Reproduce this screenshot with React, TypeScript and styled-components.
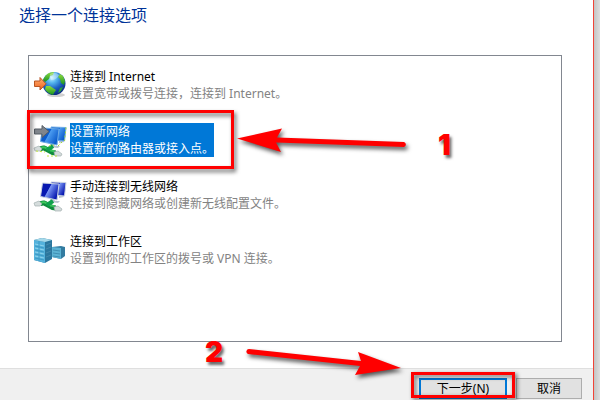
import React from "react";
import styled, { createGlobalStyle } from "styled-components";

const GlobalStyle = createGlobalStyle`
  * { box-sizing: border-box; }
  body {
    margin: 0;
    font: 12px/17px "Noto Sans", "Noto Sans CJK SC", sans-serif;
    color: #000;
    background: #fff;
  }
  button { font: inherit; color: inherit; margin: 0; }
`;

const Screen = styled.div`
  display: flex;
  min-height: 100vh;
  overflow: hidden;
  background: linear-gradient(to left, #dedede, #c4c4c4 6px);
`;

const Dialog = styled.main`
  flex: 1;
  display: flex;
  flex-direction: column;
  margin-right: 6px;
  border-right: 1px solid #f04438;
  background: #fff;
`;

const Title = styled.h1`
  margin: 3px 19px 28px;
  font-size: 16px;
  line-height: 24px;
  font-weight: 400;
  color: #003399;
`;

const OptionList = styled.ul`
  flex: 1;
  display: flex;
  flex-direction: column;
  gap: 21px;
  margin: 0 31px 26px 28px;
  padding: 12px 4px;
  list-style: none;
  border: 1px solid #828790;
`;

const OptionItem = styled.li`
  position: relative;
  display: flex;
`;

const OptionButton = styled.button`
  display: flex;
  gap: 3px;
  padding: 0;
  border: 0;
  background: none;
  text-align: left;
  white-space: nowrap;
`;

const Icon = styled.svg`
  flex: none;
  width: 34px;
  height: 34px;
  overflow: visible;
`;

const OptionText = styled.span<{ $selected: boolean }>`
  display: flex;
  flex-direction: column;
  background: ${(p) => (p.$selected ? "#0078d7" : "transparent")};
  color: ${(p) => (p.$selected ? "#fff" : "#000")};
`;

const Description = styled.span<{ $selected: boolean }>`
  color: ${(p) => (p.$selected ? "#fff" : "#838383")};
`;

const Footer = styled.footer`
  position: relative;
  display: flex;
  justify-content: flex-end;
  gap: 9px;
  height: 32px;
  padding: 9px 11px 1px;
  border-top: 1px solid #dfdfdf;
  background: #f0f0f0;
`;

const PushButton = styled.button<{ $primary?: boolean }>`
  width: ${(p) => (p.$primary ? "88px" : "66px")};
  padding: 0;
  border: ${(p) => (p.$primary ? "2px solid #0078d7" : "1px solid #adadad")};
  background: #e1e1e1;
`;

const ButtonSlot = styled.div`
  position: relative;
  display: flex;
`;

const OptionFrame = styled.span`
  position: absolute;
  left: -6px;
  top: -13px;
  width: 207px;
  height: 59px;
  border: 3px solid #f00;
  filter: drop-shadow(2px 3px 2px rgba(0, 0, 0, 0.6));
  pointer-events: none;
`;

const ButtonFrame = styled.span`
  position: absolute;
  left: -8px;
  top: -6px;
  width: 104px;
  height: 26px;
  border: 3px solid #f00;
  filter: drop-shadow(2px 2px 2px rgba(0, 0, 0, 0.6));
  pointer-events: none;
`;

const Arrow = styled.svg<{ $left: number; $top: number }>`
  position: absolute;
  left: ${(p) => p.$left}px;
  top: ${(p) => p.$top}px;
  overflow: visible;
  fill: #f00;
  filter: drop-shadow(2px 3px 2px rgba(0, 0, 0, 0.65));
  pointer-events: none;
`;

const StepNumber = styled.span<{ $left: number; $top: number }>`
  position: absolute;
  left: ${(p) => p.$left}px;
  top: ${(p) => p.$top}px;
  font: 900 28px/30px Inter, sans-serif;
  color: #f00;
  text-shadow: 2px 3px 3px rgba(0, 0, 0, 0.6);
  pointer-events: none;
`;

function GlobeIcon() {
  return (
    <Icon viewBox="0 0 34 34" aria-hidden="true">
      <defs>
        <radialGradient id="sea" cx="40%" cy="25%" r="75%">
          <stop offset="0" stopColor="#c8f2ff" />
          <stop offset=".3" stopColor="#55b5ee" />
          <stop offset=".65" stopColor="#1b5fc0" />
          <stop offset="1" stopColor="#0a2a80" />
        </radialGradient>
        <linearGradient id="land" x1="0" y1="0" x2="0" y2="1">
          <stop offset="0" stopColor="#8fdc3c" />
          <stop offset="1" stopColor="#149022" />
        </linearGradient>
        <linearGradient id="orange" x1="0" y1="0" x2="0" y2="1">
          <stop offset="0" stopColor="#ffb070" />
          <stop offset="1" stopColor="#ee6220" />
        </linearGradient>
      </defs>
      <ellipse cx="23" cy="27" rx="9" ry="2" fill="#777" opacity=".35" />
      <circle cx="21" cy="15.5" r="11.5" fill="url(#sea)" />
      <path d="M11 10Q14 4 21 4L20 7L17 8L16 11L12 14L10 12Z" fill="url(#land)" />
      <path d="M27 6L30 8L32 13L31 17L28 15L27 11L25 9Z" fill="url(#land)" />
      <path d="M13 18L17 18L20 20L23 22L21 25L20 27Q14 25 12 21Z" fill="url(#land)" />
      <path d="M27 20L30 19L28 23L25 25Z" fill="#2aa43a" />
      <path d="M17 6Q22 3 26 7Q24 12 18 12Q16 9 17 6Z" fill="#fff" opacity=".35" />
      <path d="M1.5 13H7V9.5L13 15.8L7 22V18.5H1.5Z" fill="url(#orange)" stroke="#b85522" />
    </Icon>
  );
}

function Cable() {
  return (
    <g>
      <path d="M7 26C13 22 14 30 23 30" fill="none" stroke="#0e8c3c" strokeWidth="5" />
      <path d="M8 25C13 22 14 28 21 28" fill="none" stroke="#3cc75c" strokeWidth="2" />
      <path d="M20 23L14 27" stroke="#0fa04c" strokeWidth="4" />
      <path d="M1 25L6 23L9 26L7 28L2 28Z" fill="#d5dcdc" stroke="#a3b0b0" strokeWidth=".7" />
      <path d="M21 29L25 28L29 31L28 33L22 33Z" fill="#d5dcdc" stroke="#a3b0b0" strokeWidth=".7" />
    </g>
  );
}

function Monitors({ id, light, dark, edge }: { id: string; light: string; dark: string; edge: string }) {
  return (
    <g>
      <defs>
        <linearGradient id={id} x1="0" y1="0" x2="1" y2=".5">
          <stop offset="0" stopColor={dark} />
          <stop offset=".48" stopColor={dark} />
          <stop offset=".52" stopColor={light} />
          <stop offset="1" stopColor={dark} />
        </linearGradient>
      </defs>
      <path d="M26 17L29 16L31 19L26 20Z" fill="#b7c2cd" />
      <path d="M18 4L33 4.5L31.5 18L20 17Z" fill={`url(#${id})`} stroke={edge} />
      <path d="M17 20L21 21L22 23L27 23L25 25L17 24Z" fill="#b7c2cd" />
      <path d="M9.5 5L26 6L24 22L7.5 18.5Z" fill={`url(#${id})`} stroke={edge} />
    </g>
  );
}

function NewNetworkIcon() {
  return (
    <Icon viewBox="0 0 34 34" aria-hidden="true">
      <Monitors id="screenLight" light="#4a9bf0" dark="#0d5ccc" edge="#6cabe6" />
      <path d="M33 4.5L31.5 18M25 23L29 19" stroke="#a4dc32" strokeDasharray="2 2" />
      <Cable />
      <path d="M3 28L12 29M16 23L21 22M14 33H24" stroke="#c2e83c" strokeDasharray="2 2" />
      <path d="M1.5 6H9V2.5L16 8.5L9 14.5V11H1.5Z" fill="#7f858c" stroke="#565e66" />
    </Icon>
  );
}

function WirelessIcon() {
  return (
    <Icon viewBox="0 0 34 34" aria-hidden="true">
      <Monitors id="screenDark" light="#7a96f4" dark="#0718b0" edge="#ccd5e2" />
      <Cable />
    </Icon>
  );
}

function WorkplaceIcon() {
  return (
    <Icon viewBox="0 0 34 34" aria-hidden="true">
      <path d="M19 14L28 13L32 14V23L28 26L19 24Z" fill="#327ba0" />
      <path d="M19 14L28 15V26L19 24Z" fill="#5cb3d4" />
      <path d="M20 17L27 18M20 20L27 21M20 23L27 24" stroke="#3f8fb3" />
      <path d="M1 7L9 5L19 7V26L12 30L1 27Z" fill="#2b779e" />
      <path d="M1 7L12 9V30L1 27Z" fill="#54b2dc" />
      <path d="M1 7L9 5L19 7L12 9Z" fill="#a5d9ea" />
      <path d="M2 11L11 13M2 15L11 17M2 19L11 21M2 23L11 25" stroke="#8dd3ec" />
      <path d="M2 13L11 15M2 17L11 19M2 21L11 23M2 25L11 27M6 8V28" stroke="#3c9ac6" />
      <path d="M13 12L18 10M13 16L18 14M13 20L18 18M13 24L18 22" stroke="#4489ac" />
    </Icon>
  );
}

const options = [
  { title: "连接到 Internet", description: "设置宽带或拨号连接，连接到 Internet。", Glyph: GlobeIcon },
  { title: "设置新网络", description: "设置新的路由器或接入点。", Glyph: NewNetworkIcon },
  { title: "手动连接到无线网络", description: "连接到隐藏网络或创建新无线配置文件。", Glyph: WirelessIcon },
  { title: "连接到工作区", description: "设置到你的工作区的拨号或 VPN 连接。", Glyph: WorkplaceIcon },
];

export default function App() {
  return (
    <>
      <GlobalStyle />
      <Screen>
        <Dialog>
          <Title>选择一个连接选项</Title>
          <OptionList>
            {options.map(({ title, description, Glyph }, index) => {
              const selected = index === 1;
              return (
                <OptionItem key={title}>
                  <OptionButton type="button" aria-pressed={selected}>
                    <Glyph />
                    <OptionText $selected={selected}>
                      <span>{title}</span>
                      <Description $selected={selected}>{description}</Description>
                    </OptionText>
                  </OptionButton>
                  {selected && (
                    <>
                      <OptionFrame />
                      <Arrow $left={204} $top={5} width="170" height="25" aria-hidden="true">
                        <path d="M0 10.5L45 0.5L40 9.5L167 14A2.6 2.6 0 0 1 167 19L39 14.5L44 24Z" />
                      </Arrow>
                      <StepNumber $left={405} $top={7}>1</StepNumber>
                    </>
                  )}
                </OptionItem>
              );
            })}
          </OptionList>
          <Footer>
            <ButtonSlot>
              <PushButton type="button" $primary>下一步(N)</PushButton>
              <ButtonFrame />
              <Arrow $left={-173} $top={-29} width="156" height="28" aria-hidden="true">
                <path d="M3 0A2.6 2.6 0 0 0 2 5L114 17L109 26L155 19L112 3L115 12Z" />
              </Arrow>
              <StepNumber $left={-214} $top={-41}>2</StepNumber>
            </ButtonSlot>
            <PushButton type="button">取消</PushButton>
          </Footer>
        </Dialog>
      </Screen>
    </>
  );
}
